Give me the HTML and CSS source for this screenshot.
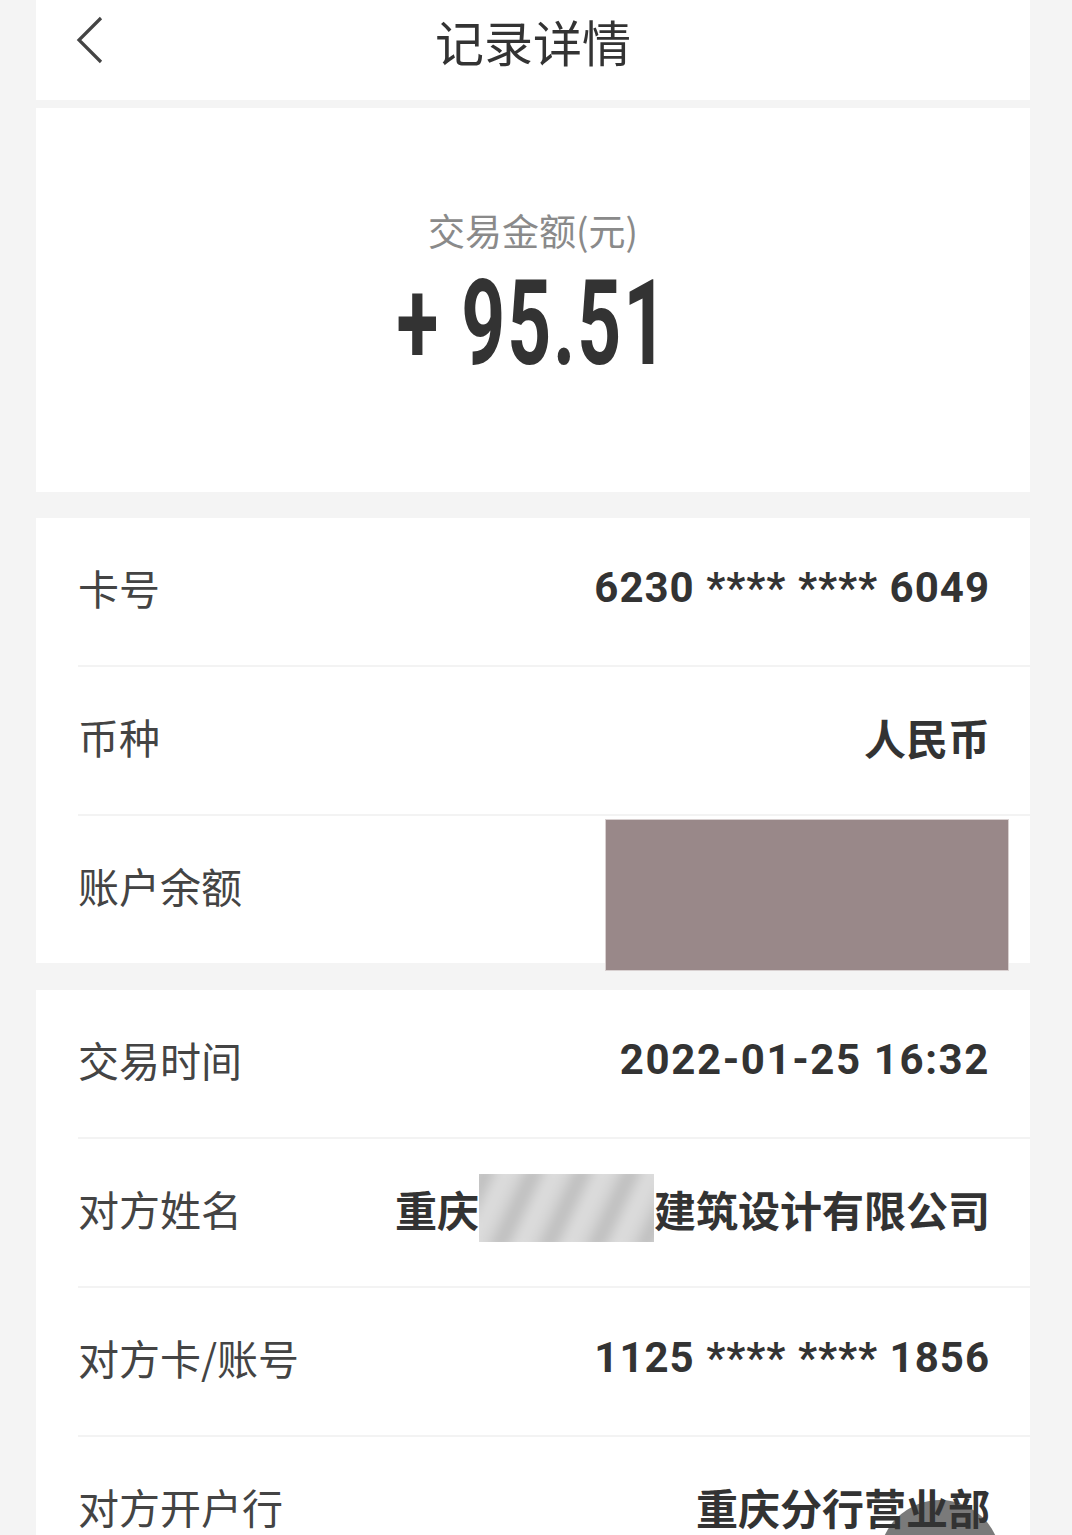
FILE: index.html
```html
<!DOCTYPE html>
<html lang="zh-CN">
<head>
<meta charset="utf-8">
<title>记录详情</title>
<link rel="stylesheet" href="styles.css">
</head>
<body>
<div class="page">
  <header class="topbar">
    <svg class="back" width="28" height="48" viewBox="0 0 28 48"><polyline points="25,2 3,24 25,46" fill="none" stroke="#444" stroke-width="3.2" stroke-linejoin="miter"/></svg>
    <h1 class="title">记录详情</h1>
  </header>
  <section class="card amount-card">
    <div class="amount-label">交易金额(元)</div>
    <div class="amount"><span class="amount-text">+ 95.51</span></div>
  </section>
  <section class="card list">
    <div class="row"><span class="label">卡号</span><span class="value num">6230 **** **** 6049</span></div>
    <div class="row"><span class="label">币种</span><span class="value">人民币</span></div>
    <div class="row last"><span class="label">账户余额</span><span class="mask"></span></div>
  </section>
  <section class="card list">
    <div class="row"><span class="label">交易时间</span><span class="value num date">2022-01-25 16:32</span></div>
    <div class="row"><span class="label">对方姓名</span><span class="value">重庆<span class="blur"><span class="blur-inner"></span></span>建筑设计有限公司</span></div>
    <div class="row"><span class="label">对方卡/账号</span><span class="value num">1125 **** **** 1856</span></div>
    <div class="row last"><span class="label">对方开户行</span><span class="value">重庆分行营业部</span></div>
  </section>
  <div class="float-btn"></div>
</div>
</body>
</html>
```
FILE: styles.css
```css
html, body {
  margin: 0;
  padding: 0;
  background: #f4f4f4;
}
body {
  font-family: "Noto Sans CJK SC", "Noto Sans", sans-serif;
  color: #333;
  overflow: hidden;
}
.page {
  position: relative;
  width: 994px;
  margin: 0 0 0 36px;
  height: 1535px;
  overflow: hidden;
}
.topbar {
  background: #fff;
  height: 100px;
  display: flex;
  align-items: center;
  justify-content: center;
  position: relative;
  margin-bottom: 8px;
}
.back {
  position: absolute;
  left: 40px;
  top: 16px;
}
.title {
  margin: 0;
  font-size: 49px;
  font-weight: 400;
  color: #333;
  line-height: 1;
  position: relative;
  top: -10px;
}
.card {
  background: #fff;
}
.amount-card {
  height: 384px;
  display: flex;
  flex-direction: column;
  align-items: center;
  margin-bottom: 26px;
}
.amount-label {
  margin-top: 98px;
  font-size: 37px;
  color: #8a8a8a;
  line-height: 48px;
}
.amount {
  margin-top: 20px;
  height: 100px;
  display: flex;
  justify-content: center;
}
.amount-text {
  display: inline-block;
  font-family: "Roboto", "Liberation Sans", sans-serif;
  font-weight: 700;
  font-size: 118px;
  line-height: 100px;
  color: #333;
  transform: scaleX(0.65);
  white-space: pre;
  letter-spacing: 3px;
}
.list {
  margin-bottom: 27px;
}
.row {
  box-sizing: border-box;
  height: 149px;
  padding-bottom: 9px;
  margin-left: 42px;
  padding-right: 40px;
  display: flex;
  align-items: center;
  justify-content: space-between;
  border-bottom: 2px solid #f3f3f3;
  position: relative;
}
.row.last {
  border-bottom: none;
  height: 147px;
}
.label {
  font-size: 41px;
  color: #444;
}
.value {
  font-size: 42px;
  font-weight: 700;
  color: #333;
  display: flex;
  align-items: center;
  white-space: pre;
  position: relative;
  z-index: 2;
}
.value.num {
  font-family: "Roboto", "Noto Sans CJK SC", sans-serif;
  font-size: 42px;
  letter-spacing: 1px;
}
.value.date {
  letter-spacing: 1.6px;
}
.mask {
  position: absolute;
  right: 22px;
  top: 4px;
  width: 402px;
  height: 150px;
  background: #998889;
  box-shadow: 0 0 0 1px #d8d0d0;
}
.blur {
  display: inline-block;
  width: 175px;
  height: 68px;
  overflow: hidden;
  position: relative;
}
.blur-inner {
  position: absolute;
  inset: -10px;
  background: repeating-linear-gradient(115deg, #e2e2e2 0px, #b8b8b8 18px, #e4e4e4 36px, #cdcdcd 44px);
  filter: blur(6px);
}
.float-btn {
  position: absolute;
  z-index: 1;
  left: 843px;
  top: 1500px;
  width: 122px;
  height: 122px;
  border-radius: 50%;
  background: #7a7a7a;
}
```
